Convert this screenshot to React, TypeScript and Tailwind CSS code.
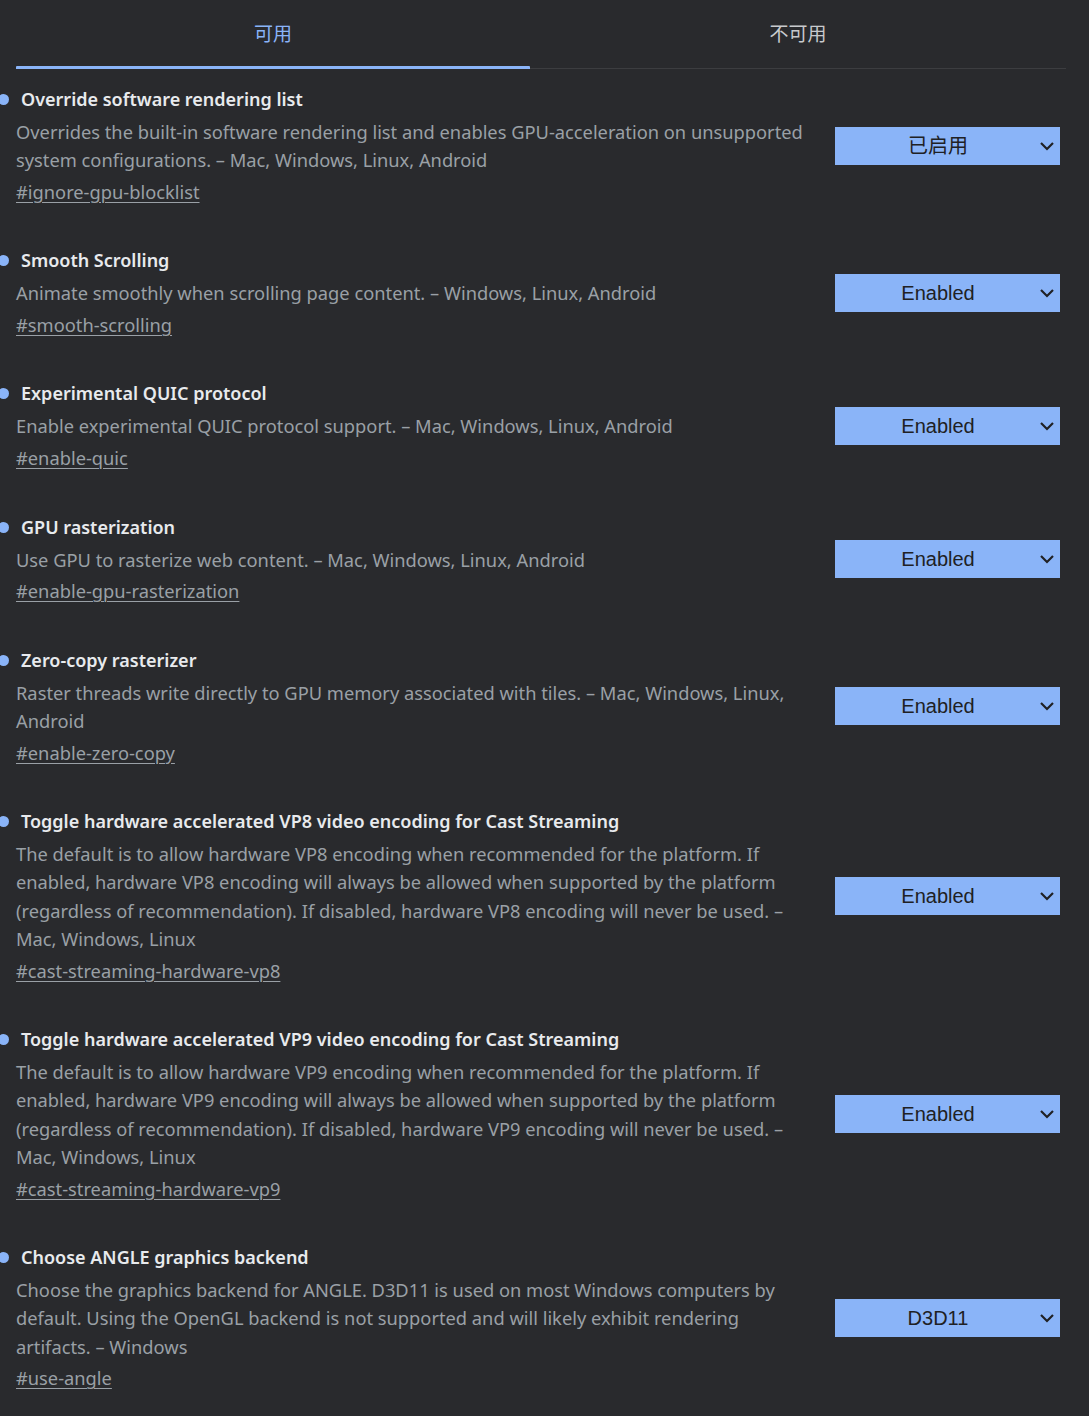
import React from "react";

type Flag = {
  title: string;
  lines: string[];
  link: string;
  value: string;
};

const flags: Flag[] = [
  {
    title: "Override software rendering list",
    lines: [
      "Overrides the built-in software rendering list and enables GPU-acceleration on unsupported",
      "system configurations. – Mac, Windows, Linux, Android",
    ],
    link: "#ignore-gpu-blocklist",
    value: "已启用",
  },
  {
    title: "Smooth Scrolling",
    lines: ["Animate smoothly when scrolling page content. – Windows, Linux, Android"],
    link: "#smooth-scrolling",
    value: "Enabled",
  },
  {
    title: "Experimental QUIC protocol",
    lines: ["Enable experimental QUIC protocol support. – Mac, Windows, Linux, Android"],
    link: "#enable-quic",
    value: "Enabled",
  },
  {
    title: "GPU rasterization",
    lines: ["Use GPU to rasterize web content. – Mac, Windows, Linux, Android"],
    link: "#enable-gpu-rasterization",
    value: "Enabled",
  },
  {
    title: "Zero-copy rasterizer",
    lines: [
      "Raster threads write directly to GPU memory associated with tiles. – Mac, Windows, Linux,",
      "Android",
    ],
    link: "#enable-zero-copy",
    value: "Enabled",
  },
  {
    title: "Toggle hardware accelerated VP8 video encoding for Cast Streaming",
    lines: [
      "The default is to allow hardware VP8 encoding when recommended for the platform. If",
      "enabled, hardware VP8 encoding will always be allowed when supported by the platform",
      "(regardless of recommendation). If disabled, hardware VP8 encoding will never be used. –",
      "Mac, Windows, Linux",
    ],
    link: "#cast-streaming-hardware-vp8",
    value: "Enabled",
  },
  {
    title: "Toggle hardware accelerated VP9 video encoding for Cast Streaming",
    lines: [
      "The default is to allow hardware VP9 encoding when recommended for the platform. If",
      "enabled, hardware VP9 encoding will always be allowed when supported by the platform",
      "(regardless of recommendation). If disabled, hardware VP9 encoding will never be used. –",
      "Mac, Windows, Linux",
    ],
    link: "#cast-streaming-hardware-vp9",
    value: "Enabled",
  },
  {
    title: "Choose ANGLE graphics backend",
    lines: [
      "Choose the graphics backend for ANGLE. D3D11 is used on most Windows computers by",
      "default. Using the OpenGL backend is not supported and will likely exhibit rendering",
      "artifacts. – Windows",
    ],
    link: "#use-angle",
    value: "D3D11",
  },
];

function Chevron() {
  return (
    <svg width="16" height="10" viewBox="0 0 16 10" className="absolute right-[5px] top-1/2 -translate-y-1/2">
      <path d="M2 2 L8 8 L14 2" fill="none" stroke="#202124" strokeWidth="2.2" />
    </svg>
  );
}

function Row({ f }: { f: Flag }) {
  return (
    <div className="flex items-center">
      <div className="relative w-[819px] shrink-0 pl-[16px]">
        <div className="relative h-[28px] leading-[28px] text-[18px] font-semibold text-[#e8eaed] mb-[5px]">
          <span className="absolute left-[-18px] top-[9px] w-[11px] h-[11px] rounded-full bg-[#8ab4f8]" />
          <span className="ml-[5px] whitespace-nowrap">{f.title}</span>
        </div>
        <div className="text-[18.3px] leading-[28.3px] text-[#9aa0a6]">
          {f.lines.map((l, i) => (
            <div key={i} className="whitespace-nowrap">
              {l}
            </div>
          ))}
        </div>
        <div className="mt-[3.5px] text-[18.3px] leading-[28.3px] text-[#9aa0a6]">
          <span className="underline underline-offset-[3px] decoration-1">{f.link}</span>
        </div>
      </div>
      <div className="relative ml-[16px] w-[225px] h-[38px] bg-[#8ab4f8] flex items-center justify-center pr-[19px] text-[#202124] text-[20px] font-['Liberation_Sans','Noto_Sans_CJK_SC',sans-serif]">
        <span>{f.value}</span>
        <Chevron />
      </div>
    </div>
  );
}

export default function App() {
  return (
    <div className="min-h-[1416px] w-[1089px] bg-[#292a2d] overflow-hidden font-['Noto_Sans','Noto_Sans_CJK_SC',sans-serif]">
      <div className="ml-[16px] w-[1050px] flex border-b border-[#3c3d40] h-[69px]">
        <div className="relative w-[514px] flex items-center justify-center text-[19px] text-[#8ab4f8] pb-[2px]">
          <span className="font-['Noto_Sans_CJK_SC',sans-serif]">可用</span>
          <span className="absolute left-0 right-0 bottom-[-1px] h-[3px] bg-[#8ab4f8] rounded-t-[1px]" />
        </div>
        <div className="flex-1 flex items-center justify-center text-[19px] text-[#c8cacd] pb-[2px]">
          <span className="font-['Noto_Sans_CJK_SC',sans-serif]">不可用</span>
        </div>
      </div>
      <div className="pt-[16px] flex flex-col gap-[40px]">
        {flags.map((f, i) => (
          <Row key={i} f={f} />
        ))}
      </div>
    </div>
  );
}
